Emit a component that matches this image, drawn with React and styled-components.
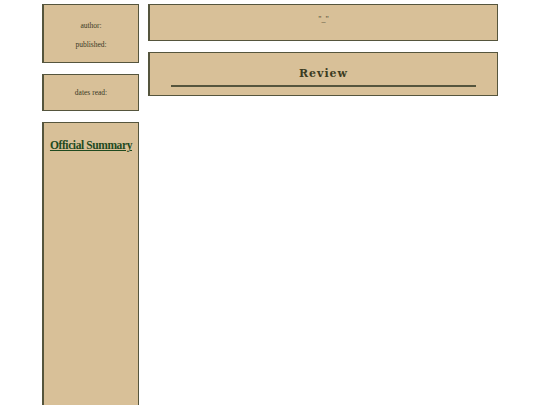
import styled, { createGlobalStyle } from "styled-components";

const GlobalStyle = createGlobalStyle`
  body {
    margin: 0;
    background: #ffffff;
    font-family: "Liberation Serif", "DejaVu Serif", serif;
    color: #3a3a26;
  }
`;

const Page = styled.div`
  width: 456px;
  margin: 0 auto;
  padding-top: 4px;
  display: grid;
  grid-template-columns: 97px 1fr;
  gap: 9px;
  height: 405px;
  overflow: hidden;
  box-sizing: border-box;
`;

const Column = styled.div`
  display: flex;
  flex-direction: column;
  gap: 11px;
`;

const Panel = styled.div`
  background: #d8c098;
  border: 1px solid #55553d;
  border-left-width: 2px;
  box-sizing: border-box;
  height: ${({ h }) => (h ? `${h}px` : "auto")};
  flex: ${({ grow }) => (grow ? 1 : "none")};
  min-height: ${({ grow }) => (grow ? "400px" : "0")};
  display: flex;
  flex-direction: column;
  align-items: center;
  justify-content: ${({ top }) => (top ? "flex-start" : "center")};
  padding: ${({ pad }) => pad || "0"};
`;

const Meta = styled.p`
  margin: 0;
  font-size: 7.5px;
  line-height: 19px;
  color: #3a3a26;
`;

const SummaryLink = styled.a`
  font-size: 11.5px;
  font-weight: bold;
  color: #1f4a1f;
  text-decoration: underline;
  letter-spacing: -0.4px;
`;

const Title = styled.div`
  font-size: 8px;
  color: #4a4a32;
  margin-top: -6px;
`;

const Heading = styled.h2`
  margin: 0;
  font-family: "DejaVu Serif", serif;
  font-size: 11px;
  font-weight: bold;
  letter-spacing: 1px;
  color: #3c3c22;
`;

const Rule = styled.hr`
  width: 305px;
  margin: 5px 0 0;
  border: none;
  border-top: 2px solid #55553d;
`;

export default function App() {
  return (
    <>
      <GlobalStyle />
      <Page>
        <Column>
          <Panel h={59} pad="2px 0 0">
            <Meta>author:</Meta>
            <Meta>published:</Meta>
          </Panel>
          <Panel h={37}>
            <Meta>dates read:</Meta>
          </Panel>
          <Panel grow top pad="16px 0 0">
            <SummaryLink href="#">Official Summary</SummaryLink>
          </Panel>
        </Column>
        <Column>
          <Panel h={37}>
            <Title>"_"</Title>
          </Panel>
          <Panel h={44} top pad="14px 0 0">
            <Heading>Review</Heading>
            <Rule />
          </Panel>
        </Column>
      </Page>
    </>
  );
}
